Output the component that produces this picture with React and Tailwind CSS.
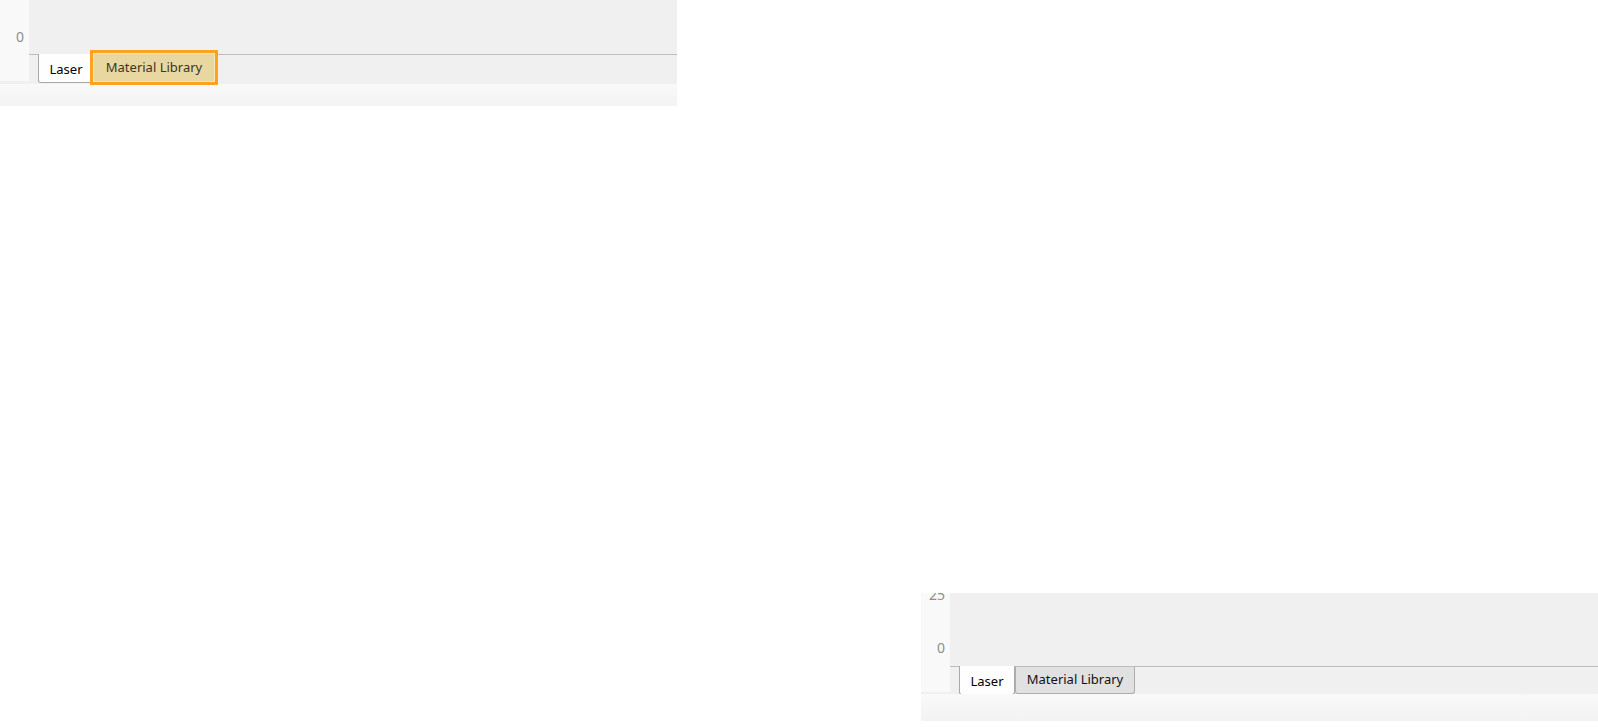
import React from "react";

const FONT = { fontFamily: '"Noto Sans", "Open Sans", sans-serif' };

function Gutter({ labels, height }) {
  return (
    <div className={`relative w-[29px] shrink-0 overflow-hidden bg-[#f9f9f9] ${height}`}>
      {labels.map((l) => (
        <span
          key={l.text}
          className="absolute right-[5px] text-[14px] leading-[16px] text-[#8e8e8e]"
          style={{ top: l.top }}
        >
          {l.text}
        </span>
      ))}
    </div>
  );
}

function LaserTab() {
  return (
    <div className="-mt-px flex h-[29px] w-[56px] shrink-0 items-center justify-center rounded-b-[3px] border border-t-0 border-[#a9a9a9] bg-[#fefefe] pt-[3px] text-[13px] text-black">
      Laser
    </div>
  );
}

function Panel({ focused, labels, chartHeight, gutterHeight, rowHeight, footHeight }) {
  return (
    <div className="flex flex-col" style={FONT}>
      <div className={`flex bg-[#f0f0f0] ${rowHeight}`}>
        <Gutter labels={labels} height={gutterHeight} />
        <div className="flex flex-1 flex-col">
          <div className={`shrink-0 ${chartHeight}`} />
          <div className="flex flex-1 border-t border-[#bdbdbd] pl-[9px]">
            <LaserTab />
            {focused ? (
              <div className="relative z-10 -ml-[4px] -mt-[5px] h-[35px] w-[128px] shrink-0 border-[3px] border-[#ffa31f]">
                <div className="flex h-full w-full items-center justify-center border border-[#f3e6b9] bg-[#e8d7a1] text-[13px] text-[#3a3528]">
                  Material Library
                </div>
              </div>
            ) : (
              <div className="flex h-[27px] w-[120px] shrink-0 items-center justify-center rounded-b-[3px] border border-t-0 border-[#adadad] bg-[#e1e1e1] text-[13px] text-[#111]">
                Material Library
              </div>
            )}
          </div>
        </div>
      </div>
      <div className={`bg-gradient-to-b from-[#f9f9f9] to-[#f3f3f3] ${footHeight}`} />
    </div>
  );
}

export default function App() {
  return (
    <div className="h-[727px] w-[1598px] overflow-hidden bg-white">
      <div className="w-[677px]">
        <Panel
          focused
          labels={[{ text: "0", top: 29 }]}
          chartHeight="h-[54px]"
          gutterHeight="h-[81px]"
          rowHeight="h-[84px]"
          footHeight="h-[22px]"
        />
      </div>
      <div className="ml-[921px] mt-[487px]">
        <Panel
          labels={[
            { text: "25", top: -6 },
            { text: "0", top: 47 },
          ]}
          chartHeight="h-[73px]"
          gutterHeight="h-[99px]"
          rowHeight="h-[101px]"
          footHeight="h-[27px]"
        />
      </div>
    </div>
  );
}
